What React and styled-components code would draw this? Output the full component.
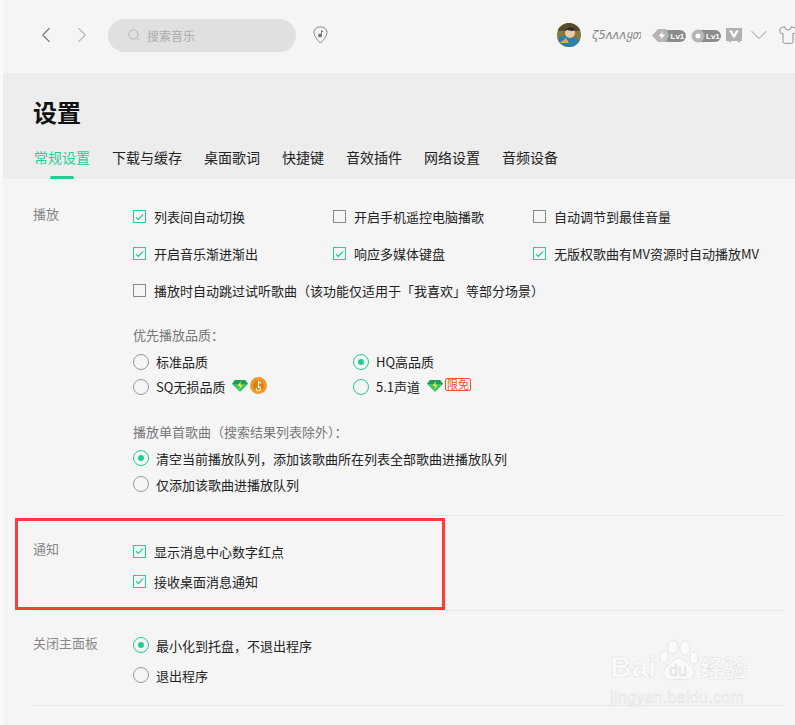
import React from 'react';
import styled, { createGlobalStyle } from 'styled-components';
import { ChevronLeft, ChevronRight, ChevronDown, Search, Shirt } from 'lucide-react';

const green = '#1fcf95';

const Global = createGlobalStyle`
  html, body { margin: 0; padding: 0; background: #f5f5f5; }
  body {
    font-family: "Noto Sans CJK SC", "Liberation Sans", sans-serif;
    color: #222;
  }
`;

const Page = styled.div`
  position: relative;
  width: 795px;
  height: 725px;
  overflow: hidden;
  box-sizing: border-box;
  border-left: 3px solid #fafafa;
  background: #f5f5f5;
`;

const TopBar = styled.div`
  height: 73px;
  display: flex;
  align-items: center;
  padding-left: 34px;
  padding-bottom: 3px;
  box-sizing: border-box;
`;

const NavBtn = styled.div`
  width: 18px;
  height: 18px;
  margin-right: 18px;
  display: flex;
  align-items: center;
  justify-content: center;
  color: ${p => (p.$off ? '#b5b5b5' : '#777')};
  svg { flex: none; }
`;

const SearchBox = styled.div`
  width: 188px;
  height: 33px;
  margin-left: -1px;
  border-radius: 17px;
  background: #e0e0e0;
  display: flex;
  align-items: center;
  padding-left: 19px;
  box-sizing: border-box;
  color: #aaa;
  font-size: 12px;
  gap: 6px;
`;

const Pick = styled.svg`
  margin-left: 17px;
`;

const UserArea = styled.div`
  margin-left: auto;
  margin-right: -3px;
  display: flex;
  align-items: center;
`;

const Avatar = styled.div`
  width: 24px;
  height: 24px;
  border-radius: 50%;
  overflow: hidden;
  margin-right: 11px;
`;

const Nick = styled.span`
  width: 49px;
  margin-right: 11px;
  font-family: "DejaVu Sans", sans-serif;
  font-style: italic;
  font-size: 12px;
  letter-spacing: -0.3px;
  color: #888;
  white-space: nowrap;
  overflow: hidden;
`;

const Badge = styled.svg`
  margin-right: ${p => p.$gap}px;
`;

const MenuArrow = styled.span`
  display: flex;
  margin-left: 3px;
  color: #888;
`;

const ShirtBtn = styled.span`
  display: flex;
  margin-left: 5px;
  color: #8a8a8a;
`;

const HeadPanel = styled.div`
  height: 106px;
  background: #ededed;
  box-sizing: border-box;
  padding: 23px 0 0 30px;
`;

const Title = styled.h1`
  margin: 0;
  font-size: 24px;
  line-height: 32px;
  font-weight: 700;
  color: #111;
`;

const Tabs = styled.div`
  display: flex;
  gap: 22px;
  margin-top: 17px;
  padding-left: 1px;
`;

const Tab = styled.div`
  position: relative;
  font-size: 14px;
  line-height: 24px;
  height: 34px;
  color: ${p => (p.$on ? green : '#222')};
  &::after {
    content: '';
    display: ${p => (p.$on ? 'block' : 'none')};
    position: absolute;
    left: 16px;
    bottom: 0;
    width: 24px;
    height: 3px;
    border-radius: 2px;
    background: ${green};
  }
`;

const Section = styled.section`
  display: flex;
  margin: 0 12px 0 30px;
  padding: ${p => p.$pad};
  border-bottom: 1px solid #e6e6e6;
`;

const Label = styled.div`
  width: 100px;
  flex: none;
  font-size: 13px;
  line-height: 20px;
  color: #888;
  margin-top: ${p => p.$top}px;
`;

const Content = styled.div`
  flex: 1;
  min-width: 0;
`;

const CheckGrid = styled.div`
  display: grid;
  grid-template-columns: 200px 200px auto;
  grid-auto-rows: 37px;
`;

const Wide = styled.div`
  grid-column: 1 / -1;
  display: flex;
`;

const Row = styled.div`
  display: flex;
  align-items: center;
  height: ${p => p.$h || 30}px;
  font-size: 13px;
  color: #222;
  white-space: nowrap;
`;

const Box = styled.span`
  width: 11px;
  height: 11px;
  flex: none;
  margin-right: 8px;
  border: 1px solid ${p => (p.$on ? green : '#888')};
  display: flex;
  align-items: center;
  justify-content: center;
`;

const Dot = styled.span`
  width: 14px;
  height: 14px;
  flex: none;
  margin-right: 7px;
  border-radius: 50%;
  border: 1px solid ${p => (p.$on ? green : '#999')};
  display: flex;
  align-items: center;
  justify-content: center;
  &::after {
    content: '';
    display: ${p => (p.$dot ? 'block' : 'none')};
    width: 6px;
    height: 6px;
    border-radius: 50%;
    background: ${green};
  }
`;

const SubHead = styled.div`
  font-size: 13px;
  line-height: 20px;
  color: #777;
  margin-top: ${p => p.$top}px;
  margin-bottom: ${p => p.$bottom}px;
`;

const RadioGrid = styled.div`
  display: grid;
  grid-template-columns: 220px auto;
`;

const Tag = styled.span`
  margin-left: 2px;
  padding: 0 1px;
  height: 11px;
  line-height: 11px;
  font-size: 11px;
  color: #f4502a;
  border: 1px solid #f4502a;
  border-radius: 2px;
  margin-top: -4px;
`;

const Vip = styled.svg`
  margin-left: ${p => p.$left}px;
  margin-top: -2px;
`;

const RedFrame = styled.div`
  position: absolute;
  left: 12px;
  top: 518px;
  width: 430px;
  height: 92px;
  box-sizing: border-box;
  border: 3px solid #ff3b3b;
`;

const Watermark = styled.div`
  position: absolute;
  left: 607px;
  top: 638px;
  width: 160px;
  color: #fafafa;
  -webkit-text-stroke: 0.5px #dedede;
  pointer-events: none;
`;

const Paw = styled.svg`
  position: absolute;
  left: 48px;
  top: 1px;
`;

const MarkTop = styled.div`
  display: flex;
  align-items: flex-end;
  height: 46px;
  font-family: "Liberation Sans", sans-serif;
  font-size: 30px;
  line-height: 34px;
  font-weight: 700;
`;

const MarkGap = styled.span`
  width: 43px;
`;

const MarkCn = styled.span`
  font-family: "Noto Sans CJK SC", sans-serif;
  font-size: 24px;
  line-height: 34px;
`;

const MarkUrl = styled.div`
  font-family: "Liberation Sans", sans-serif;
  font-size: 16px;
  line-height: 18px;
  margin-top: 5px;
  letter-spacing: 0.3px;
`;

const CheckMark = () => (
  <svg width="9" height="8" viewBox="0 0 9 8">
    <path d="M1 4.200 L3.400 6.400 L8 1.400" fill="none" stroke={green} strokeWidth="1.2" />
  </svg>
);

const Check = ({ on, children }) => (
  <Row $h={37}>
    <Box $on={on}>{on && <CheckMark />}</Box>
    {children}
  </Row>
);

const Radio = ({ on, dot, h, children }) => (
  <Row $h={h}>
    <Dot $on={on} $dot={dot} />
    {children}
  </Row>
);

const Diamond = () => (
  <Vip $left={7} width="16" height="13" viewBox="0 0 16 13">
    <path d="M3 1h10l3 4-8 8-8-8z" fill="#3cc46a" />
    <path d="M3 1h10l3 4H0z" fill="#1f9d55" />
    <path d="M9 2 5.500 7H8l-1 4 3.600-5.200H8.200z" fill="#ffe93c" />
  </Vip>
);

const GoldCoin = () => (
  <Vip $left={2} width="17" height="17" viewBox="0 0 16 16">
    <circle cx="8" cy="8" r="8" fill="#f0992a" />
    <circle cx="8" cy="8" r="5" fill="#d97d12" />
    <path d="M8 3.500v7M6 10.500a2 2 0 1 0 2-1.600M8 4.500l2.500 1.500" fill="none" stroke="#fff0cf" strokeWidth="1.200" />
  </Vip>
);

export default function App() {
  return (
    <Page>
      <Global />
      <TopBar>
        <NavBtn><ChevronLeft size={26} strokeWidth={1} /></NavBtn>
        <NavBtn $off><ChevronRight size={26} strokeWidth={1} /></NavBtn>
        <SearchBox>
          <Search size={14} strokeWidth={1.2} color="#a5a5a5" />
          搜索音乐
        </SearchBox>
        <Pick width="15" height="18" viewBox="0 0 15 18">
          <path d="M7.500 1C11 1 14 2.500 14 6.500 14 10 10 14.500 7.500 17 5 14.500 1 10 1 6.500 1 2.500 4 1 7.500 1z" fill="none" stroke="#888" strokeWidth="1" />
          <circle cx="7" cy="9.500" r="2" fill="#777" />
          <path d="M8.500 9.500V4.500L10 6" fill="none" stroke="#777" strokeWidth="1" />
        </Pick>
        <UserArea>
          <Avatar>
            <svg width="24" height="24" viewBox="0 0 24 24">
              <rect width="24" height="24" fill="#8a7a3a" />
              <rect y="0" width="24" height="8" fill="#5a4a2a" />
              <path d="M0 24V15l8-3 9 2 7 4v6z" fill="#2f7fa8" />
              <circle cx="13" cy="10" r="5" fill="#e9c9a8" />
              <path d="M8 8c1-4 8-5 10-1l-3 1-5-1z" fill="#2a2a2a" />
              <path d="M3 20l6-5 3 5z" fill="#d9b13a" />
            </svg>
          </Avatar>
          <Nick>ζ5ʌʌʌყთ</Nick>
          <Badge $gap={5} width="34" height="15" viewBox="0 0 34 15">
            <rect x="10" y="2" width="24" height="12" rx="6" fill="#8c8c8c" />
            <path d="M6 1h8l3 6.500-3 6.500H6L0 7.500z" fill="#b5b5b5" />
            <path d="M11 3 6.500 8.500h3L8.500 12l4.500-5.500h-3z" fill="#fff" />
            <text x="18.500" y="11" fontSize="8" fontWeight="700" fill="#fff" fontFamily="Liberation Sans">Lv1</text>
          </Badge>
          <Badge $gap={5} width="30" height="15" viewBox="0 0 30 15">
            <rect x="4" y="2" width="26" height="12" rx="6" fill="#8c8c8c" />
            <circle cx="7" cy="8" r="6.500" fill="#b5b5b5" />
            <circle cx="7" cy="8" r="2.500" fill="#fff" />
            <text x="15" y="11" fontSize="8" fontWeight="700" fill="#fff" fontFamily="Liberation Sans">Lv1</text>
          </Badge>
          <Badge $gap={0} width="16" height="15" viewBox="0 0 16 15">
            <rect width="16" height="13" fill="#b0b0b0" />
            <path d="M3 2.500h3l2 4 2-4h3l-5 8z" fill="#fff" />
            <path d="M2 13h3v2zM11 13h3v2z" fill="#b0b0b0" />
          </Badge>
          <MenuArrow><ChevronDown size={28} strokeWidth={0.8} /></MenuArrow>
          <ShirtBtn><Shirt size={20} strokeWidth={1.1} /></ShirtBtn>
        </UserArea>
      </TopBar>

      <HeadPanel>
        <Title>设置</Title>
        <Tabs>
          <Tab $on>常规设置</Tab>
          <Tab>下载与缓存</Tab>
          <Tab>桌面歌词</Tab>
          <Tab>快捷键</Tab>
          <Tab>音效插件</Tab>
          <Tab>网络设置</Tab>
          <Tab>音频设备</Tab>
        </Tabs>
      </HeadPanel>

      <Section $pad="19px 0 18px">
        <Label $top={6}>播放</Label>
        <Content>
          <CheckGrid>
            <Check on>列表间自动切换</Check>
            <Check>开启手机遥控电脑播歌</Check>
            <Check>自动调节到最佳音量</Check>
            <Check on>开启音乐渐进渐出</Check>
            <Check on>响应多媒体键盘</Check>
            <Check on>无版权歌曲有MV资源时自动播放MV</Check>
            <Wide><Check>播放时自动跳过试听歌曲（该功能仅适用于「我喜欢」等部分场景）</Check></Wide>
          </CheckGrid>
          <SubHead $top={16} $bottom={4}>优先播放品质：</SubHead>
          <RadioGrid>
            <Radio h={25}>标准品质</Radio>
            <Radio h={25} on dot>HQ高品质</Radio>
            <Radio h={25}>SQ无损品质<Diamond /><GoldCoin /></Radio>
            <Radio h={25} on>5.1声道<Diamond /><Tag>限免</Tag></Radio>
          </RadioGrid>
          <SubHead $top={23} $bottom={3}>播放单首歌曲（搜索结果列表除外）：</SubHead>
          <Radio h={26} on dot>清空当前播放队列，添加该歌曲所在列表全部歌曲进播放队列</Radio>
          <Radio h={26}>仅添加该歌曲进播放队列</Radio>
        </Content>
      </Section>

      <Section $pad="20px 0 14px">
        <Label $top={3}>通知</Label>
        <Content>
          <Row><Box $on><CheckMark /></Box>显示消息中心数字红点</Row>
          <Row><Box $on><CheckMark /></Box>接收桌面消息通知</Row>
        </Content>
      </Section>

      <Section $pad="19px 0 15px">
        <Label $top={3}>关闭主面板</Label>
        <Content>
          <Radio on dot>最小化到托盘，不退出程序</Radio>
          <Radio>退出程序</Radio>
        </Content>
      </Section>

      <RedFrame />
      <Watermark>
        <Paw width="42" height="46" viewBox="0 0 42 46">
          <g fill="#fafafa" stroke="#dedede" strokeWidth="0.8">
            <ellipse cx="15" cy="8" rx="5" ry="7" />
            <ellipse cx="27" cy="9" rx="5" ry="7" />
            <ellipse cx="6" cy="18" rx="4.500" ry="6" />
            <ellipse cx="36" cy="19" rx="4.500" ry="6" />
            <path d="M21 19c5 0 7 5 12 8 6 4 3 14-4 14-3 0-5-1-8-1s-5 1-8 1c-7 0-10-10-4-14 5-3 7-8 12-8z" />
          </g>
          <text x="11" y="37" fontSize="16" fontFamily="Liberation Sans" fill="#f5f5f5" stroke="#d8d8d8" strokeWidth="0.5">du</text>
        </Paw>
        <MarkTop>Bai<MarkGap /><MarkCn>经验</MarkCn></MarkTop>
        <MarkUrl>jingyan.baidu.com</MarkUrl>
      </Watermark>
    </Page>
  );
}
